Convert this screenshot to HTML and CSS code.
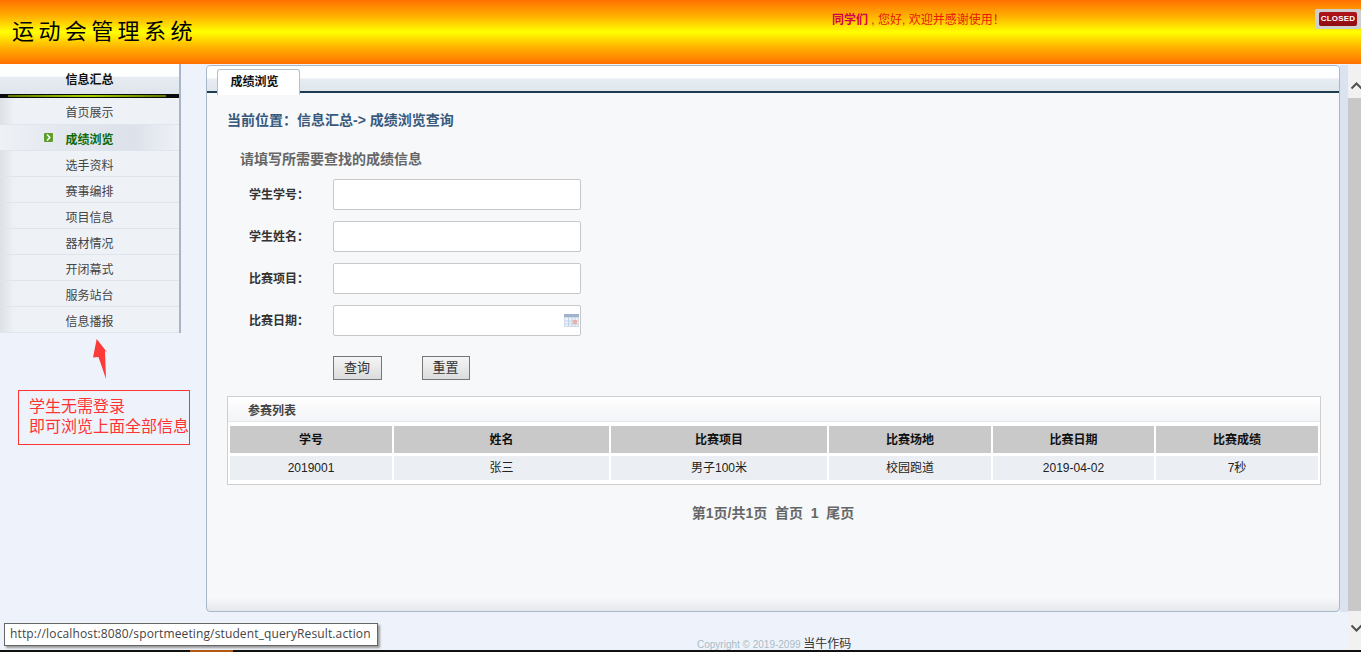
FILE: index.html
```html
<!DOCTYPE html>
<html lang="zh-CN">
<head>
<meta charset="utf-8">
<title>运动会管理系统</title>
<link rel="stylesheet" href="styles.css">
</head>
<body>
<div class="page">
  <header class="top">
    <h1 class="logo">运动会管理系统</h1>
    <p class="welcome"><b>同学们</b> , 您好, 欢迎并感谢使用！</p>
    <span class="closed"><span class="closed-in">CLOSED</span></span>
  </header>
  <div class="body">
    <aside class="side">
      <div class="side-head">信息汇总</div>
      <div class="side-bar"><i></i></div>
      <ul class="menu">
        <li>首页展示</li>
        <li class="on"><svg class="mark" width="9" height="9" viewBox="0 0 9 9"><rect width="9" height="9" rx="1" fill="#5f9e2c"/><path d="M3 1.6 5.8 4.5 3 7.4" fill="none" stroke="#fff" stroke-width="1.5"/></svg>成绩浏览</li>
        <li>选手资料</li>
        <li>赛事编排</li>
        <li>项目信息</li>
        <li>器材情况</li>
        <li>开闭幕式</li>
        <li>服务站台</li>
        <li>信息播报</li>
      </ul>
    </aside>
    <main class="panel-wrap">
      <section class="panel">
        <div class="tabs"><span class="tab">成绩浏览</span></div>
        <div class="content">
          <h2 class="crumb">当前位置：信息汇总-&gt; 成绩浏览查询</h2>
          <h3 class="hint">请填写所需要查找的成绩信息</h3>
          <form class="form">
            <div class="row"><label>学生学号：</label><span class="input"></span></div>
            <div class="row"><label>学生姓名：</label><span class="input"></span></div>
            <div class="row"><label>比赛项目：</label><span class="input"></span></div>
            <div class="row"><label>比赛日期：</label><span class="input date">
              <svg width="15" height="13" viewBox="0 0 15 13"><rect width="15" height="13" fill="#cfdbe8"/><rect y="0" width="15" height="3" fill="#9db4cc"/><rect x="1" y="4" width="13" height="8" fill="#eef3f8"/><path d="M1 7H14M1 10H14M4.5 4V12M8 4V12M11 4V12" stroke="#c3d2e2" stroke-width="1"/><rect x="9" y="6" width="4" height="4" fill="#eeb0a0"/></svg>
            </span></div>
            <div class="btns"><span class="btn">查询</span><span class="btn">重置</span></div>
          </form>
          <div class="list">
            <div class="list-title">参赛列表</div>
            <div class="grid">
              <div class="th">学号</div><div class="th">姓名</div><div class="th">比赛项目</div><div class="th">比赛场地</div><div class="th">比赛日期</div><div class="th">比赛成绩</div>
              <div class="td">2019001</div><div class="td">张三</div><div class="td">男子100米</div><div class="td">校园跑道</div><div class="td">2019-04-02</div><div class="td">7秒</div>
            </div>
          </div>
          <p class="pager">第1页/共1页&nbsp;&nbsp;首页&nbsp;&nbsp;1&nbsp;&nbsp;尾页</p>
        </div>
      </section>
      <div class="gutter"></div>
    </main>
    <div class="scroll">
      <svg class="arr" width="13" height="8" viewBox="0 0 13 8"><path d="M1.5 6.5 6.5 1.5 11.5 6.5" fill="none" stroke="#505050" stroke-width="2"/></svg>
      <div class="thumb"></div>
      <svg class="arr" width="13" height="8" viewBox="0 0 13 8"><path d="M1.5 1.5 6.5 6.5 11.5 1.5" fill="none" stroke="#505050" stroke-width="2"/></svg>
    </div>
  </div>
  <svg class="arrow" width="16" height="41" viewBox="0 0 16 41"><path d="M3.7 0 14.7 14 12 11.5 13 40 5.5 18 0 18.5Z" fill="#fb3a3a"/></svg>
  <div class="note">学生无需登录<br>即可浏览上面全部信息</div>
  <footer class="foot">Copyright © 2019-2099 <span>当牛作码</span></footer>
  <div class="status">http://localhost:8080/sportmeeting/student_queryResult.action</div>
  <div class="strip"><i></i></div>
</div>
</body>
</html>
```
FILE: styles.css
```css
* { box-sizing: border-box; }
html, body { margin: 0; height: 100%; overflow: hidden; }
body { font-family: "Liberation Sans", "Noto Sans CJK SC", sans-serif; font-size: 12px; color: #333; background: #eef3fb; }
.page { position: relative; width: 1361px; height: 652px; overflow: hidden; display: flex; flex-direction: column; }
ul, h1, h2, h3, p { margin: 0; padding: 0; font-size: inherit; }

.top { flex: none; height: 64px; display: flex; align-items: flex-start; background: linear-gradient(#ff7000 0%, #ffb000 25%, #ffff00 50%, #ffb000 75%, #ff7000 100%); }
.logo { width: 820px; padding: 14px 0 0 12px; font-family: "Noto Sans CJK SC", serif; font-weight: 400; font-size: 22px; line-height: 30px; letter-spacing: 4.4px; color: #000; }
.welcome { flex: 1; padding-top: 12px; padding-left: 12px; font-size: 12px; line-height: 16px; color: #e8170c; }
.welcome b { color: #d4004c; }
.closed { width: 46px; height: 20px; margin-top: 9px; padding: 3px 4px; background: #cfcfcf; border-radius: 2px; }
.closed-in { display: block; height: 14px; background: linear-gradient(#b0141a, #8f0d12); border-radius: 2px; color: #fff; font: bold 8px/14px "Liberation Sans", sans-serif; text-align: center; letter-spacing: .2px; }

.body { flex: none; height: 588px; display: flex; }
.side { width: 181px; height: 269px; flex: none; border-right: 2px solid #a7b5c7; background: #eef2f7; }
.side-head { height: 30px; font-weight: bold; font-size: 12px; line-height: 32px; text-align: center; color: #111; background: linear-gradient(#fdfefe 0, #fdfefe 40%, #e6ecf1 45%, #dfe5ec 100%); }
.side-bar { height: 4px; background: #0b0b0b; padding: 1px 13px 1px 8px; }
.side-bar i { display: block; height: 2px; background: linear-gradient(90deg, #5c7a00, #a8d400 50%, #5c7a00); }
.menu { list-style: none; height: 235px; }
.menu li { position: relative; height: 26px; line-height: 30px; text-align: center; color: #444; border-bottom: 1px solid #dfe5ec; background: linear-gradient(90deg, #dde1e6 0, #eef2f7 14px); }
.menu li:first-child { height: 27px; }
.menu .on { font-weight: bold; color: #0c6a0c; background: linear-gradient(90deg, #eef2f7 0, #e2e6ed 40%, #dde2ea 75%, #eef2f7 100%); }
.mark { position: absolute; left: 44px; top: 8px; }

.panel-wrap { width: 1167px; padding: 1px 0 0 25px; display: flex; height: 548px; flex: none; }
.panel { width: 1134px; height: 547px; flex: none; border: 1px solid #a9b8c8; border-radius: 4px; background: linear-gradient(#f6f8fa 0, #f6f8fa 97.5%, #e6e9ec 100%); display: flex; flex-direction: column; }
.gutter { width: 8px; flex: none; background: #dbe3f0; }
.tabs { height: 27px; flex: none; padding-left: 10px; border-bottom: 2px solid #1d3c52; background: linear-gradient(#fdfefe 0, #fdfefe 48%, #e6ecf2 52%, #dfe6ec 100%); border-radius: 4px 4px 0 0; }
.tab { display: block; width: 83px; height: 26px; margin-top: 3px; padding-right: 8px; background: #fff; border: 1px solid #b5c0cb; border-bottom: 0; border-radius: 3px 3px 0 0; text-align: center; font-weight: bold; line-height: 25px; color: #111; }
.content { padding: 0 20px; flex: 1; }
.crumb { margin-top: 17px; font-size: 14px; line-height: 20px; font-weight: bold; color: #38597c; }
.hint { margin: 19px 0 0 13px; font-size: 14px; line-height: 20px; font-weight: bold; color: #666; }
.form { display: flex; flex-direction: column; }
.row { display: flex; align-items: center; height: 31px; margin-top: 11px; }
.row:first-child { margin-top: 10px; }
.row label { width: 106px; padding: 0 0 2px 22px; font-weight: bold; color: #333; }
.input { width: 248px; height: 31px; background: #fff; border: 1px solid #c8c8c8; border-radius: 2px; display: flex; align-items: center; justify-content: flex-end; padding-right: 1px; }
.btns { display: flex; gap: 40px; margin: 20px 0 0 106px; }
.btn { width: 49px; height: 24px; padding-right: 1px; border: 1px solid #777; background: linear-gradient(#f5f5f5, #dcdcdc); text-align: center; font-size: 13px; line-height: 22px; color: #333; }
.btn + .btn { width: 48px; }
.list { margin-top: 16px; width: 1094px; height: 89px; border: 1px solid #cfcfcf; background: #fff; }
.list-title { height: 25px; padding-left: 20px; font-weight: bold; line-height: 29px; color: #444; background: linear-gradient(#fff, #f2f4f8); border-bottom: 1px solid #e4e6ea; }
.grid { display: grid; grid-template-columns: 162px 215px 216px 162px 161px 162px; column-gap: 2px; row-gap: 3px; padding: 4px 2px 0; }
.th { height: 27px; background: #c9c9c9; text-align: center; font-weight: bold; line-height: 28px; color: #111; }
.td { height: 24px; background: #ebeff4; text-align: center; line-height: 25px; color: #222; }
.pager { margin-top: 18px; text-align: center; font-size: 14px; font-weight: bold; line-height: 20px; color: #666; }

.scroll { width: 13px; flex: none; height: 588px; background: #f1f1f1; display: flex; flex-direction: column; }
.arr { flex: none; margin: 18px 0 8px 2px; overflow: visible; }
.thumb { width: 100%; height: 513px; background: #c8c8c8; flex: none; }
.scroll .thumb + .arr { margin: 13px 0 0 2px; }

.arrow { position: absolute; left: 93px; top: 339px; }
.note { position: absolute; left: 18px; top: 390px; width: 172px; height: 55px; padding: 6px 0 0 10px; border: 1px solid #f33; background: #eef3fb; font-size: 16px; line-height: 20px; color: #f33; white-space: nowrap; overflow: hidden; }
.foot { position: absolute; left: 697px; top: 637px; font-size: 10px; line-height: 14px; color: #a9bcc4; }
.foot span { font-size: 12px; color: #333; }
.status { position: absolute; left: 4px; top: 623px; width: 374px; height: 23px; padding-left: 5px; background: #fff; border: 1px solid #666; box-shadow: 2px 2px 2px #999; font-family: "Open Sans", "Liberation Sans", sans-serif; font-size: 12px; line-height: 20px; letter-spacing: .13px; color: #444; white-space: nowrap; }
.strip { position: absolute; left: 0; right: 0; bottom: 0; height: 2px; background: #111; }
.strip i { display: block; width: 43px; height: 2px; margin-left: 190px; background: #b25a14; }
```
